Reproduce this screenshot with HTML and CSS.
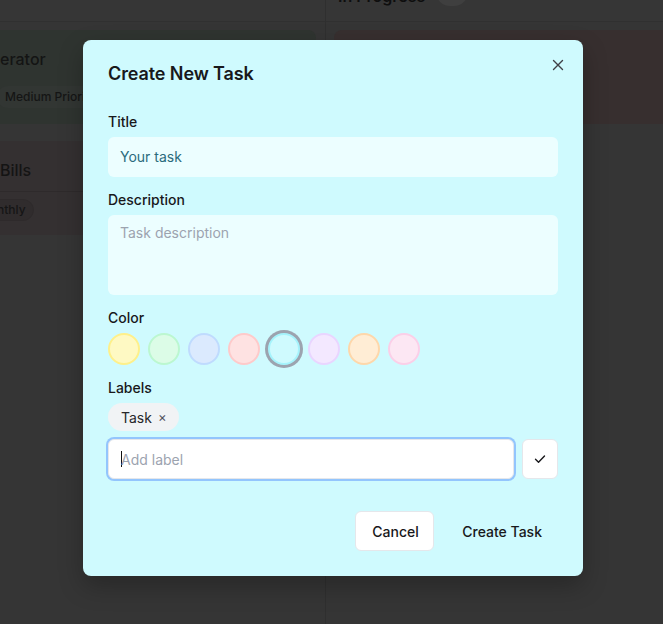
FILE: index.html
```html
<!DOCTYPE html>
<html lang="en">
<head>
<meta charset="utf-8">
<title>Create New Task</title>
<link rel="stylesheet" href="styles.css">
</head>
<body>
<div class="board">
  <section class="column column-left">
    <header class="col-head">
      <span class="col-title">To Do</span>
      <span class="col-add">+</span>
    </header>
    <div class="col-body">
      <article class="card card-green">
        <h3 class="card-title">erator</h3>
        <div class="card-tags"><span class="tag tag-first">Medium Priority</span></div>
      </article>
      <article class="card card-red">
        <h3 class="card-title card-title-sep">Bills</h3>
        <div class="card-tags"><span class="tag tag-cut">nthly</span></div>
      </article>
    </div>
  </section>
  <section class="column column-right">
    <header class="col-head col-head-right">
      <span class="col-title">In Progress</span>
      <span class="col-count"></span>
    </header>
    <div class="col-body">
      <article class="card card-brown"></article>
    </div>
  </section>
</div>

<div class="overlay">
  <div class="modal">
    <button class="close" aria-label="Close">
      <svg width="12" height="12" viewBox="0 0 12 12"><path d="M1.5 1.5l9 9M10.5 1.5l-9 9" stroke="#3f3f46" stroke-width="1.4" stroke-linecap="round" fill="none"/></svg>
    </button>
    <h2 class="modal-title">Create New Task</h2>

    <div class="field">
      <label class="label">Title</label>
      <div class="input input-title">Your task</div>
    </div>

    <div class="field">
      <label class="label">Description</label>
      <div class="input textarea placeholder">Task description</div>
    </div>

    <div class="field">
      <label class="label">Color</label>
      <div class="swatches">
        <span class="swatch sw-yellow"></span>
        <span class="swatch sw-green"></span>
        <span class="swatch sw-blue"></span>
        <span class="swatch sw-red"></span>
        <span class="swatch sw-cyan selected"></span>
        <span class="swatch sw-purple"></span>
        <span class="swatch sw-orange"></span>
        <span class="swatch sw-pink"></span>
      </div>
    </div>

    <div class="field">
      <label class="label">Labels</label>
      <div class="chips"><span class="chip">Task <span class="chip-x">×</span></span></div>
      <div class="label-row">
        <div class="label-input"><span class="caret"></span><span class="placeholder">Add label</span></div>
        <button class="check" aria-label="Add">
          <svg width="14" height="14" viewBox="0 0 14 14"><path d="M2.5 7.3l3 3 6-6.3" stroke="#18181b" stroke-width="1.4" stroke-linecap="round" stroke-linejoin="round" fill="none"/></svg>
        </button>
      </div>
    </div>

    <div class="actions">
      <button class="btn btn-outline">Cancel</button>
      <button class="btn btn-ghost">Create Task</button>
    </div>
  </div>
</div>
</body>
</html>
```
FILE: styles.css
```css
* { box-sizing: border-box; }
html, body { margin: 0; padding: 0; }
body {
  width: 663px;
  height: 624px;
  overflow: hidden;
  background: #353535;
  font-family: Inter, "Noto Sans", sans-serif;
  color: #18181b;
  position: relative;
}

/* background board */
.board {
  display: flex;
  height: 624px;
  margin-left: -220px;
  width: 900px;
}
.column { display: flex; flex-direction: column; }
.column-left { width: 546px; border-right: 1px solid #2f2f2f; }
.column-right { flex: 1; }
.col-head {
  height: 22px;
  border-bottom: 1px solid #303030;
  display: flex;
  align-items: flex-end;
  justify-content: space-between;
  padding: 0 16px 0 12px;
  background: #363636;
}
.col-head-right { justify-content: flex-start; gap: 11px; padding-left: 12px; }
.col-title {
  font-size: 16px;
  font-weight: 600;
  color: #0e0e0e;
  line-height: 20px;
  margin-bottom: 15px;
}
.col-add { color: #151515; font-size: 16px; margin-bottom: 18px; line-height: 20px; }
.col-count {
  width: 32px; height: 28px; border-radius: 14px;
  background: #3f3f3f;
  margin-bottom: 15px;
}
.col-body { display: flex; flex-direction: column; gap: 17px; padding: 8px 9px 0 8px; }
.column-left .col-body { padding-left: 0; }
.card { border-radius: 8px; }
.card-green { background: #2f3430; height: 94px; padding: 18px 0 0 220px; }
.card-red { background: #343031; height: 94px; padding: 0 0 0 217px; }
.card-brown { background: #372f2f; height: 94px; margin-right: -40px; }
.column-right .col-body { padding-left: 8px; }
.card-title {
  margin: 0;
  font-size: 16px;
  font-weight: 500;
  color: #141414;
  line-height: 22px;
}
.card-title-sep {
  padding: 18px 0 10px 220px;
  border-bottom: 1px solid #2e2a2b;
  margin-left: -217px;
}
.card-tags { display: flex; margin-top: 16px; }
.card-red .card-tags { margin-top: 7px; }
.tag {
  font-size: 12px;
  font-weight: 500;
  color: #151515;
  background: #363a37;
  border-radius: 12px;
  padding: 3px 8px;
  line-height: 16px;
}
.tag-first { margin-left: -3px; background: #323633; }
.tag-cut { margin-left: -8px; background: #302c2d; border: 1px solid #2e2a2b; padding: 2px 7px; }

/* modal */
.overlay {
  position: absolute;
  inset: 0;
  display: flex;
  align-items: flex-start;
  padding: 40px 0 0 83px;
}
.modal {
  position: relative;
  width: 500px;
  height: 536px;
  background: #cffafe;
  border-radius: 8px;
  padding: 24px 25px 25px;
  box-shadow: 0 10px 25px rgba(0,0,0,0.25);
  display: flex;
  flex-direction: column;
}
.close {
  position: absolute;
  right: 19px;
  top: 19px;
  width: 12px; height: 12px;
  padding: 0; border: 0; background: none;
  display: flex;
}
.modal-title {
  margin: 0 0 27px;
  font-size: 18px;
  font-weight: 600;
  line-height: 20px;
  color: #18181b;
  letter-spacing: -0.1px;
}
.field { display: flex; flex-direction: column; margin-bottom: 12px; }
.label {
  font-size: 14px;
  font-weight: 500;
  line-height: 20px;
  color: #18181b;
  padding-top: 1px;
  margin-bottom: 5px;
}
.input {
  background: #ecfeff;
  border-radius: 6px;
  height: 40px;
  padding: 10px 12px;
  font-size: 14px;
  line-height: 20px;
}
.input-title { color: #2b6b7c; }
.textarea { height: 80px; padding: 8px 12px; }
.placeholder { color: #9ca3af; }

.swatches { display: flex; gap: 8px; height: 32px; }
.swatch {
  width: 32px; height: 32px; border-radius: 50%;
  border: 2px solid;
}
.sw-yellow { background: #fef9c3; border-color: #fef08a; }
.sw-green { background: #dcfce7; border-color: #bbf7d0; }
.sw-blue { background: #dbeafe; border-color: #bfdbfe; }
.sw-red { background: #fee2e2; border-color: #fecaca; }
.sw-cyan { background: #cffafe; border-color: #a5f3fc; }
.sw-purple { background: #f3e8ff; border-color: #e9d5ff; }
.sw-orange { background: #ffedd5; border-color: #fed7aa; }
.sw-pink { background: #fce7f3; border-color: #fbcfe8; }
.selected { box-shadow: 0 0 0 3px #9ca3af; }

.chips { display: flex; margin-bottom: 8px; }
.chip {
  display: inline-flex;
  align-items: center;
  gap: 6px;
  height: 28px;
  padding: 0 12px 0 13px;
  border-radius: 14px;
  background: #f1f3f5;
  font-size: 14px;
  color: #27272a;
}
.chip-x { font-size: 13px; color: #52525b; }

.label-row { display: flex; gap: 8px; }
.label-input {
  flex: 1;
  height: 40px;
  background: #fff;
  border: 1px solid #e5e7eb;
  border-radius: 6px;
  box-shadow: 0 0 0 2px #93c5fd;
  display: flex;
  align-items: center;
  padding-left: 12px;
  font-size: 14px;
}
.caret { width: 1px; height: 16px; background: #111; margin-right: -1px; }
.check {
  width: 36px; height: 40px;
  background: #fff;
  border: 1px solid #e5e7eb;
  border-radius: 6px;
  display: flex; align-items: center; justify-content: center;
  padding: 0;
}

.actions {
  margin-top: auto;
  display: flex;
  justify-content: flex-end;
  gap: 12px;
}
.btn {
  height: 40px;
  font-family: inherit;
  font-size: 14px;
  font-weight: 500;
  color: #18181b;
  border-radius: 6px;
  padding: 0 16px;
}
.btn-outline { background: #fff; border: 1px solid #e5e7eb; width: 79px; }
.btn-ghost { background: transparent; border: 0; }
```
